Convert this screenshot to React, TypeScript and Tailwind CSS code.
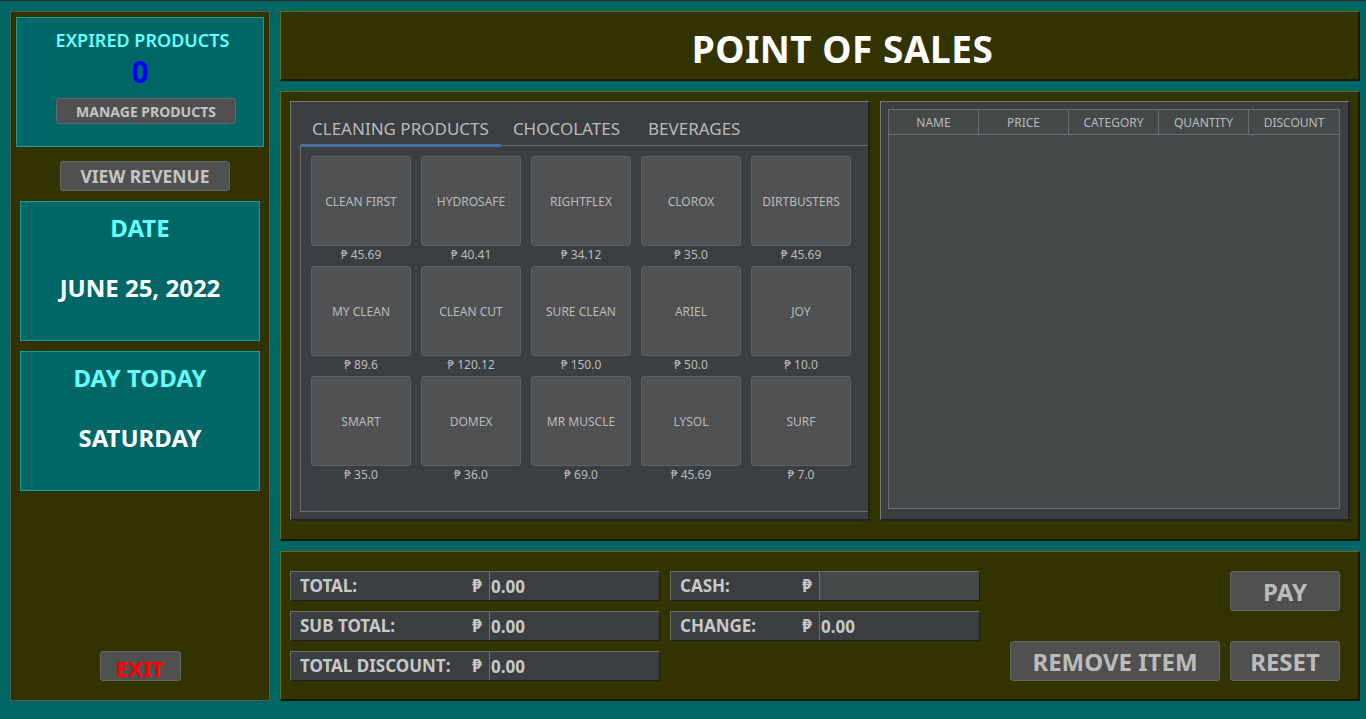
import React from 'react';

const products = [
  { name: 'CLEAN FIRST', price: '45.69' },
  { name: 'HYDROSAFE', price: '40.41' },
  { name: 'RIGHTFLEX', price: '34.12' },
  { name: 'CLOROX', price: '35.0' },
  { name: 'DIRTBUSTERS', price: '45.69' },
  { name: 'MY CLEAN', price: '89.6' },
  { name: 'CLEAN CUT', price: '120.12' },
  { name: 'SURE CLEAN', price: '150.0' },
  { name: 'ARIEL', price: '50.0' },
  { name: 'JOY', price: '10.0' },
  { name: 'SMART', price: '35.0' },
  { name: 'DOMEX', price: '36.0' },
  { name: 'MR MUSCLE', price: '69.0' },
  { name: 'LYSOL', price: '45.69' },
  { name: 'SURF', price: '7.0' },
];

const columns = ['NAME', 'PRICE', 'CATEGORY', 'QUANTITY', 'DISCOUNT'];

function Field({ label, value, labelW, empty }: { label: string; value: string; labelW: string; empty?: boolean }) {
  return (
    <div className="flex h-[30px] w-full border border-t-[#6b6e70] border-l-[#6b6e70] border-b-[#1e1f20] border-r-[#1e1f20] bg-[#3c3f41] text-[17px] font-bold text-[#c8c8c8]">
      <div className={`${labelW} flex items-center justify-between pl-[9px] pr-[7px] border-r border-[#6b6e70]`}>
        <span>{label}</span>
        <span className="text-[17px]">₱</span>
      </div>
      <div className={`flex-1 flex items-center pl-[1px] pt-[2px] ${empty ? 'bg-[#45494a]' : ''}`}>{value}</div>
    </div>
  );
}

export default function App() {
  return (
    <div
      className="w-[1366px] h-[719px] bg-[#006666] border-t border-[#2b2b2b] flex gap-[10px] pt-[10px] pl-[10px] pr-[6px] pb-[18px] overflow-hidden"
      style={{ fontFamily: '"Noto Sans", "Open Sans", sans-serif' }}
    >
      {/* left column */}
      <div className="w-[260px] h-[690px] bg-[#333300] border border-[#5a5a50] flex flex-col items-center px-[5px] pt-[5px]">
        <div className="w-full h-[130px] bg-[#006666] border border-[#0fa0a0] flex flex-col items-center">
          <div className="mt-[10px] ml-[5px] text-[18px] leading-[24px] font-semibold text-[#66ffff]">EXPIRED PRODUCTS</div>
          <div className="text-[30px] leading-[34px] font-bold text-[#0000ff] mt-[3px]">0</div>
          <button className="mt-[9px] ml-[12px] w-[180px] h-[26px] rounded-[3px] bg-[#505050] border border-[#656565] text-[14px] font-bold text-[#c4c4c4]">
            MANAGE PRODUCTS
          </button>
        </div>
        <button className="mt-[14px] ml-[10px] w-[170px] h-[30px] pt-[1px] rounded-[3px] bg-[#505050] border border-[#656565] text-[17.5px] font-bold text-[#c4c4c4]">
          VIEW REVENUE
        </button>
        <div className="mt-[10px] w-[240px] h-[140px] bg-[#006666] border border-[#0fa0a0] flex flex-col items-center">
          <div className="mt-[11px] text-[24px] leading-[30px] font-bold text-[#66ffff]">DATE</div>
          <div className="mt-[30px] text-[24px] leading-[30px] font-bold text-white">JUNE 25, 2022</div>
        </div>
        <div className="mt-[10px] w-[240px] h-[140px] bg-[#006666] border border-[#0fa0a0] flex flex-col items-center">
          <div className="mt-[11px] text-[24px] leading-[30px] font-bold text-[#66ffff]">DAY TODAY</div>
          <div className="mt-[30px] text-[24px] leading-[30px] font-bold text-white">SATURDAY</div>
        </div>
        <button className="mt-[160px] w-[81px] h-[30px] pb-[2px] rounded-[3px] bg-[#505050] border border-[#656565] text-[22px] font-bold text-[#ff0000]">
          EXIT
        </button>
      </div>

      {/* right column */}
      <div className="w-[1080px] flex flex-col gap-[10px]">
        <div className="h-[70px] bg-[#333300] border-t border-l border-t-[#6b6b00] border-l-[#6b6b00] border-b-2 border-r-2 border-b-[#1a1a00] border-r-[#1a1a00] flex items-center justify-center">
          <h1 className="text-[37px] font-bold text-white tracking-[0.5px] ml-[46px] mt-[6px]">POINT OF SALES</h1>
        </div>

        <div className="h-[450px] bg-[#333300] border-t border-l border-t-[#6b6b00] border-l-[#6b6b00] border-b-2 border-r-2 border-b-[#1a1a00] border-r-[#1a1a00] flex gap-[10px] pl-[9px] pt-[9px]">
          {/* products */}
          <div className="w-[580px] h-[420px] bg-[#3c3f41] border-t border-l border-t-[#77797b] border-l-[#77797b] border-b-2 border-r-2 border-b-[#232425] border-r-[#232425] pl-[9px] pt-[9px] flex flex-col">
            <div className="flex h-[35px] items-end text-[17px] text-[#bbbbbb] border-b border-[#6b6e70]">
              <div className="px-[12px] h-full flex items-center pt-[1px] border-b-[3px] border-[#4a6d9e] mb-[-2px]">CLEANING PRODUCTS</div>
              <div className="px-[12px] h-full flex items-center pt-[1px]">CHOCOLATES</div>
              <div className="pl-[16px] pr-[12px] h-full flex items-center pt-[1px]">BEVERAGES</div>
            </div>
            <div className="h-[366px] border-l border-b border-[#6b6e70] pl-[10px] pt-[10px]">
              <div className="grid grid-cols-[repeat(5,100px)] gap-x-[10px]">
                {products.map((p) => (
                  <div key={p.name} className="flex flex-col items-center">
                    <div className="w-[100px] h-[90px] pt-[1px] rounded-[3px] bg-[#4f5153] border border-[#5e6163] flex items-center justify-center text-[12px] text-[#bbbbbb]">
                      {p.name}
                    </div>
                    <div className="h-[18px] flex items-center text-[12px] text-[#bbbbbb]">₱ {p.price}</div>
                    <div className="h-[2px]" />
                  </div>
                ))}
              </div>
            </div>
          </div>

          {/* cart */}
          <div className="w-[470px] h-[420px] bg-[#3c3f41] border-t border-l border-t-[#77797b] border-l-[#77797b] border-b-2 border-r-2 border-b-[#232425] border-r-[#232425] pl-[7px] pt-[7px]">
            <div className="w-[452px] h-[400px] bg-[#45494a] border border-[#6b6e70]">
              <div className="grid grid-cols-5 h-[25px] border-b border-[#6b6e70]">
                {columns.map((c, i) => (
                  <div
                    key={c}
                    className={`flex items-center justify-center pt-[2px] text-[12px] text-[#bbbbbb] ${i < 4 ? 'border-r border-[#6b6e70]' : ''}`}
                  >
                    {c}
                  </div>
                ))}
              </div>
            </div>
          </div>
        </div>

        <div className="h-[150px] bg-[#333300] border-t border-l border-t-[#6b6b00] border-l-[#6b6b00] border-b-2 border-r-2 border-b-[#1a1a00] border-r-[#1a1a00] flex pl-[9px] pt-[19px]">
          <div className="w-[370px] flex flex-col gap-[10px]">
            <Field label="TOTAL:" value="0.00" labelW="w-[199px]" />
            <Field label="SUB TOTAL:" value="0.00" labelW="w-[199px]" />
            <Field label="TOTAL DISCOUNT:" value="0.00" labelW="w-[199px]" />
          </div>
          <div className="w-[310px] ml-[10px] flex flex-col gap-[10px]">
            <Field label="CASH:" value="" labelW="w-[149px]" empty />
            <Field label="CHANGE:" value="0.00" labelW="w-[149px]" />
          </div>
          <div className="ml-[30px] flex flex-col">
            <div className="flex justify-end">
              <button className="w-[110px] h-[40px] pt-[1px] rounded-[3px] bg-[#505050] border border-[#656565] text-[24px] font-bold text-[#bbbbbb]">PAY</button>
            </div>
            <div className="mt-[30px] flex gap-[10px]">
              <button className="w-[210px] h-[40px] pt-[1px] rounded-[3px] bg-[#505050] border border-[#656565] text-[24px] font-bold text-[#bbbbbb]">REMOVE ITEM</button>
              <button className="w-[110px] h-[40px] pt-[1px] rounded-[3px] bg-[#505050] border border-[#656565] text-[24px] font-bold text-[#bbbbbb]">RESET</button>
            </div>
          </div>
        </div>
      </div>
    </div>
  );
}
